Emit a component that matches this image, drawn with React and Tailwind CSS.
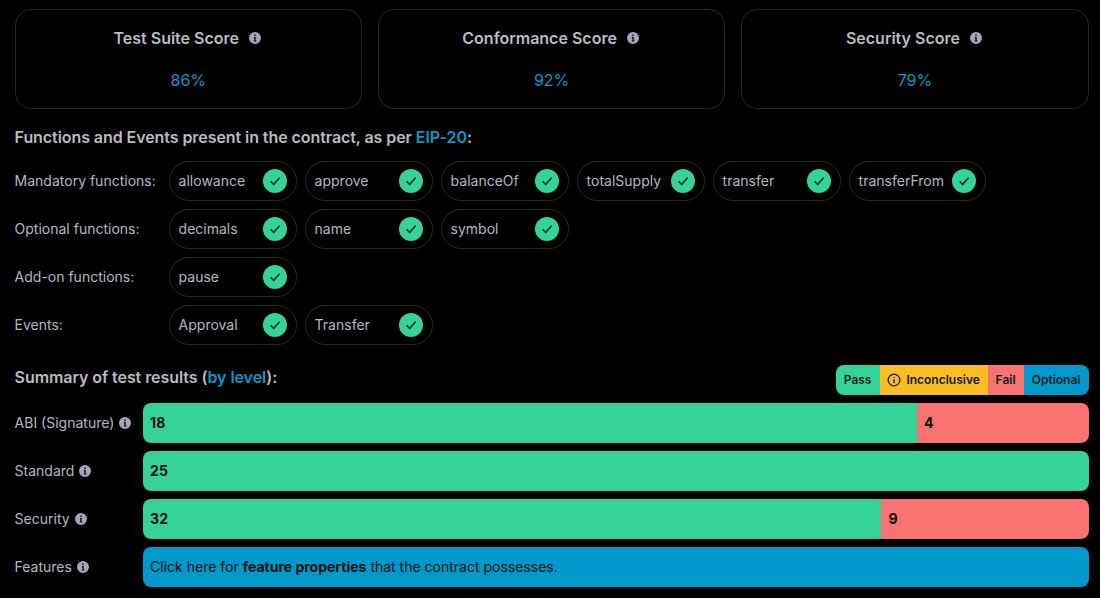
import React from "react";

const InfoDot = ({ size = 12, className = "" }) => (
  <svg
    viewBox="0 0 20 20"
    width={size}
    height={size}
    className={`shrink-0 text-[#a3a8b8] ${className}`}
    fill="currentColor"
  >
    <path
      fillRule="evenodd"
      clipRule="evenodd"
      d="M10 0a10 10 0 1 0 0 20 10 10 0 0 0 0-20ZM8.9 4.2h2.2v2.6H8.9V4.2Zm-.7 4.2h2.9v5.6h1.1v2H8v-2h1v-3.6h-.8v-2Z"
    />
  </svg>
);

const ScoreCard = ({ title, score }) => (
  <div className="h-[100px] rounded-2xl border border-[#26282c] flex flex-col items-center pt-[18px]">
    <div className="flex items-center gap-[10px] h-[20px] pr-[2px]">
      <span className="text-base font-semibold text-[#b9bcc2]">{title}</span>
      <InfoDot />
    </div>
    <span className="mt-[20px] text-base leading-[24px] text-[#0f97c9]">{score}</span>
  </div>
);

const Pill = ({ name, wide }) => (
  <div
    className={`h-[40px] ${wide ? "w-[137px]" : "w-[128px]"} rounded-full border border-[#26282c] flex items-center justify-between pl-[9px] pr-[9px]`}
  >
    <span className="text-sm text-[#b4b8c0]">{name}</span>
    <span className="w-6 h-6 rounded-full bg-[#36d399] flex items-center justify-center">
      <svg viewBox="0 0 24 24" width="16" height="16" fill="none" stroke="#0b2a20" strokeWidth="2.4">
        <path d="M5.5 12.5l4.5 4.5 9-10" />
      </svg>
    </span>
  </div>
);

const FunctionRow = ({ label, items }) => (
  <div className="flex items-center">
    <span className="w-[154px] shrink-0 text-sm text-[#b4b8c0]">{label}</span>
    <div className="flex gap-2">
      {items.map((item) => (
        <Pill key={item} name={item} wide={item === "transferFrom"} />
      ))}
    </div>
  </div>
);

const BarRow = ({ label, children }) => (
  <div className="flex items-center h-[40px]">
    <div className="w-[128px] shrink-0 flex items-center gap-[5px]">
      <span className="text-sm text-[#b4b8c0]">{label}</span>
      <InfoDot />
    </div>
    <div className="flex-1 h-full flex rounded-lg overflow-hidden text-sm text-[#0a0f0d]">{children}</div>
  </div>
);

const Segment = ({ value, total, color }) => (
  <div
    className={`${color} flex items-center pl-[7.5px] font-bold`}
    style={{ width: `${(value / total) * 100}%` }}
  >
    {value}
  </div>
);

export default function App() {
  return (
    <div className="w-[1100px] h-[598px] bg-black overflow-hidden pl-[14.6px] pr-[11.4px] pt-[9px] font-['Inter',sans-serif]">
      <div className="grid grid-cols-3 gap-4">
        <ScoreCard title="Test Suite Score" score="86%" />
        <ScoreCard title="Conformance Score" score="92%" />
        <ScoreCard title="Security Score" score="79%" />
      </div>

      <p className="mt-[16px] text-base leading-[24px] font-semibold tracking-[-0.07px] text-[#b9bcc2]">
        Functions and Events present in the contract, as per <span className="text-[#0f97c9]">EIP-20</span>:
      </p>

      <div className="mt-[12px] flex flex-col gap-2">
        <FunctionRow
          label="Mandatory functions:"
          items={["allowance", "approve", "balanceOf", "totalSupply", "transfer", "transferFrom"]}
        />
        <FunctionRow label="Optional functions:" items={["decimals", "name", "symbol"]} />
        <FunctionRow label="Add-on functions:" items={["pause"]} />
        <FunctionRow label="Events:" items={["Approval", "Transfer"]} />
      </div>

      <div className="mt-[20px] h-[30px] flex items-center justify-between">
        <p className="text-base font-semibold tracking-[-0.07px] text-[#b9bcc2] -mt-[6px]">
          Summary of test results (<span className="text-[#0f97c9]">by level</span>):
        </p>
        <div className="flex h-[30px] rounded-lg overflow-hidden text-xs font-semibold text-[#0d1a1f]">
          <div className="w-[44px] bg-[#36d399] flex items-center justify-center">Pass</div>
          <div className="w-[108px] bg-[#fbbd23] flex items-center justify-center gap-[5px]">
            <svg
              viewBox="0 0 24 24"
              width="14"
              height="14"
              fill="none"
              stroke="currentColor"
              strokeWidth="2.2"
              strokeLinecap="round"
            >
              <circle cx="12" cy="12" r="10" />
              <path d="M12 7.5h.01M12 11.5V16.5" />
            </svg>
            Inconclusive
          </div>
          <div className="w-[36px] bg-[#f87272] flex items-center justify-center">Fail</div>
          <div className="w-[65px] bg-[#0099cc] flex items-center justify-center">Optional</div>
        </div>
      </div>

      <div className="mt-2 flex flex-col gap-2">
        <BarRow label="ABI (Signature)">
          <Segment value={18} total={22} color="bg-[#36d399]" />
          <Segment value={4} total={22} color="bg-[#f87272]" />
        </BarRow>
        <BarRow label="Standard">
          <Segment value={25} total={25} color="bg-[#36d399]" />
        </BarRow>
        <BarRow label="Security">
          <Segment value={32} total={41} color="bg-[#36d399]" />
          <Segment value={9} total={41} color="bg-[#f87272]" />
        </BarRow>
        <BarRow label="Features">
          <div className="w-full bg-[#0099cc] flex items-center pl-[7.5px]">
            <span>
              Click here for <b>feature properties</b> that the contract possesses.
            </span>
          </div>
        </BarRow>
      </div>
    </div>
  );
}
